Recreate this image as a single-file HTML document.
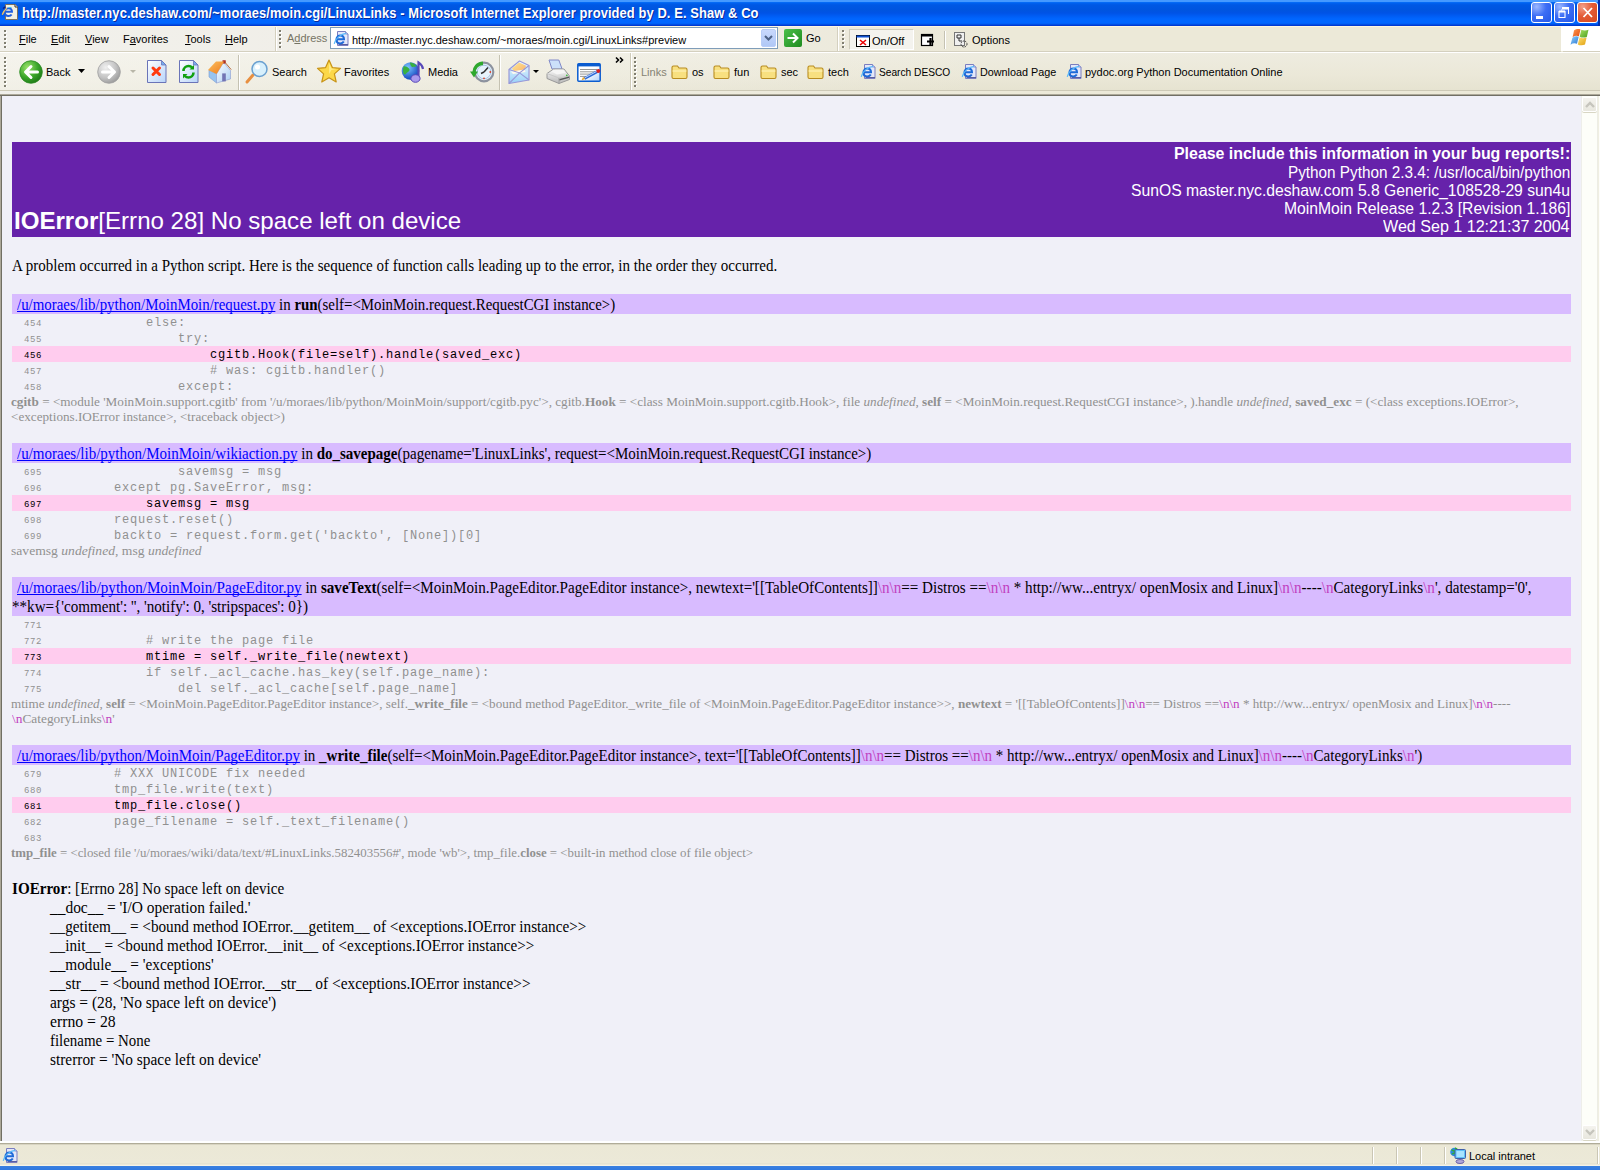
<!DOCTYPE html>
<html><head><meta charset="utf-8">
<style>
*{margin:0;padding:0;box-sizing:border-box}
html,body{width:1600px;height:1170px;overflow:hidden;background:#ece9d8;font-family:"Liberation Sans",sans-serif;position:relative}
.a{position:absolute}
svg{position:absolute;overflow:visible}
#title{left:0;top:0;width:1600px;height:26px;background:linear-gradient(#4599ff 0px,#4599ff 2px,#0a72fa 2px,#0062f0 3px,#0058e4 5px,#0055df 10px,#0053e6 13px,#005df4 16px,#0066ff 19px,#0066ff 23px,#005cf0 24px,#0040d8 25px,#0033cc 26px)}
.ttl{left:22px;top:5px;color:#fff;font:bold 14px/17px "Liberation Sans",sans-serif;text-shadow:1px 1px 0 #0a2a9a;white-space:nowrap;letter-spacing:0.1px}
.wb{top:2px;width:21px;height:21px;border:1px solid #fff;border-radius:3px}
.mnu{font:11px/13px "Liberation Sans",sans-serif;color:#000;white-space:nowrap}
.mnu u{text-decoration:underline;text-underline-offset:1px;text-decoration-skip-ink:none}
.grip{width:3px;background:linear-gradient(#807e70 0 2px,transparent 2px 4px) 0 0/2px 4px repeat-y,linear-gradient(transparent 0 1px,#fff 1px 3px,transparent 3px 4px) 1px 0/2px 4px repeat-y}
.tb{font:11px/13px "Liberation Sans",sans-serif;color:#000;white-space:nowrap}
.sep{width:2px;border-left:1px solid #c5c2b2;border-right:1px solid #fff}
.tl{position:absolute;white-space:nowrap;transform-origin:0 0}
.tl a{color:#00f;text-decoration:underline;text-decoration-skip-ink:none}
.tl s{text-decoration:none;color:#c040c0}
.sans24{font:24px/28px "Liberation Sans",sans-serif;color:#fff}
.sans16{font:16px/18px "Liberation Sans",sans-serif;color:#fff}
.serif16{font:16px/19px "Liberation Serif",serif;color:#000}
.serif13{font:13px/15px "Liberation Serif",serif;color:#909090}
.fh{left:12px;width:1559px;background:#d8bbff}
.cl{position:absolute;left:12px;width:1559px;height:16px;font:12px/16px "Liberation Mono",monospace;letter-spacing:0.8px;color:#909090;white-space:pre}
.cl>span{position:relative;top:1px}
.cl .n{font-size:9px;letter-spacing:0.6px}
.cl.hl{background:#ffccee;color:#000}
</style></head><body>
<!-- title bar -->
<div id="title" class="a"></div>
<svg style="left:0;top:2px" width="22" height="22" viewBox="0 0 22 22">
 <path d="M5.5 2.5h9.5l2.5 2.5v12.5h-12z" fill="#f2f0e4" stroke="#7c6a50" stroke-width="0.9"/>
 <path d="M15 2.5v2.5h2.5" fill="#fff" stroke="#3a3020" stroke-width="1"/>
 <path d="M11.6 12.5c-.6 1-1.8 1.5-3.2 1.5-2.2 0-3.6-1.4-3.6-3.6 0-2.3 1.6-4 3.8-4 2 0 3.4 1.4 3.4 3.4H6" stroke="#1f5ee0" stroke-width="1.9" fill="none"/>
 <path d="M8.5 5.5h3" stroke="#40c8f0" stroke-width="1"/>
 <path d="M2.3 12.8c.8-2.8 2.4-5 4.6-6.5" stroke="#f0c060" stroke-width="1.3" fill="none"/>
 <path d="M3 6.5c.6-.6 1.5-1.2 2.5-1.6" stroke="#10208a" stroke-width="1.2" fill="none"/>
</svg>
<div class="a ttl" style="transform:scaleX(0.9224);transform-origin:0 0">http://master.nyc.deshaw.com/~moraes/moin.cgi/LinuxLinks - Microsoft Internet Explorer provided by D. E. Shaw &amp; Co</div>
<div class="a wb" style="left:1531px;background:radial-gradient(circle at 25% 20%,#9cb8ff 0,#3d6ef5 45%,#2458e8 100%)"></div>
<div class="a" style="left:1536px;top:16px;width:7px;height:3px;background:#fff"></div>
<div class="a wb" style="left:1554px;background:radial-gradient(circle at 25% 20%,#9cb8ff 0,#3d6ef5 45%,#2458e8 100%)"></div>
<svg style="left:1558px;top:7px" width="12" height="11"><path d="M4 0.5h6.5v6.5M3.5 3.5v-1 M1 4.5h6v6h-6z" fill="none" stroke="#fff" stroke-width="1.1"/><path d="M1 4.5h6" stroke="#fff" stroke-width="2"/><path d="M4 1.5h6.5" stroke="#fff" stroke-width="2"/></svg>
<div class="a wb" style="left:1577px;background:radial-gradient(circle at 25% 20%,#f4a08a 0,#e35a35 45%,#d64a20 100%)"></div>
<svg style="left:1582px;top:7px" width="12" height="11"><path d="M1.5 1l8.5 9M10 1l-8.5 9" stroke="#fff" stroke-width="1.8"/></svg>
<div class="a" style="left:1598px;top:0;width:2px;height:26px;background:#0030b0"></div>

<!-- menu bar -->
<div class="a" style="left:0;top:26px;width:1600px;height:1px;background:#fdf6df"></div>
<div class="a" style="left:0;top:27px;width:1561px;height:24px;background:linear-gradient(to right,#f2f1ec 0,#efede6 500px,#ece9d8 1000px)"></div>
<div class="a" style="left:1561px;top:26px;width:39px;height:25px;background:#fff"></div>
<div class="a" style="left:0;top:51px;width:1561px;height:1px;background:#d4d0bf"></div>
<div class="a" style="left:1563px;top:51px;width:37px;height:1px;background:#d4d0bf"></div>
<div class="a grip" style="left:4px;top:30px;height:18px"></div>
<div class="a mnu" style="left:19px;top:33px"><u>F</u>ile</div>
<div class="a mnu" style="left:51px;top:33px"><u>E</u>dit</div>
<div class="a mnu" style="left:85px;top:33px"><u>V</u>iew</div>
<div class="a mnu" style="left:123px;top:33px">F<u>a</u>vorites</div>
<div class="a mnu" style="left:185px;top:33px"><u>T</u>ools</div>
<div class="a mnu" style="left:225px;top:33px"><u>H</u>elp</div>
<div class="a" style="left:275px;top:27px;width:1px;height:24px;background:#d4d0bf"></div>
<div class="a" style="left:276px;top:27px;width:1px;height:24px;background:#fff"></div>
<div class="a grip" style="left:279px;top:30px;height:18px"></div>
<div class="a mnu" style="left:287px;top:32px;color:#767464">A<u>d</u>dress</div>
<div class="a" style="left:330px;top:27px;width:448px;height:22px;background:#fff;border:1px solid #7f9db9"></div>
<svg style="left:333px;top:30px" width="16" height="16" viewBox="0 0 16 16">
 <path d="M4.5 1.5h8l2.5 2.5v11.5h-10.5z" fill="#e4e8fa" stroke="#7a7ec0"/>
 <path d="M12.5 1.5v2.5h2.5" fill="#c8d0f4" stroke="#7a7ec0" stroke-width="0.8"/>
 <path d="M5.5 14.5h9.5" stroke="#5a5ea0" stroke-width="1"/>
 <path d="M10.8 11.6c-.7 1.2-2 1.9-3.5 1.9-2.4 0-3.9-1.7-3.9-3.9 0-2.4 1.7-4.1 3.9-4.1 2.2 0 3.7 1.5 3.7 3.7H3.6" stroke="#1e6ad8" stroke-width="2" fill="none"/>
 <path d="M1.2 13.8C2.6 8 8 4 13.2 3.4" stroke="#58b8f8" stroke-width="1.1" fill="none"/>
</svg>
<div class="a mnu" style="left:352px;top:34px">http://master.nyc.deshaw.com/~moraes/moin.cgi/LinuxLinks#preview</div>
<div class="a" style="left:761px;top:29px;width:15px;height:18px;border-radius:2px;background:linear-gradient(#c8d8fc,#b0c8f6);border:1px solid #b8cdf8"></div>
<svg style="left:764px;top:35px" width="9" height="6"><path d="M1 1l3.5 3.5L8 1" stroke="#4d6185" stroke-width="2" fill="none"/></svg>
<div class="a" style="left:784px;top:29px;width:18px;height:18px;border-radius:2px;background:linear-gradient(135deg,#4cc04a,#1e8a1e)"></div>
<svg style="left:786px;top:32px" width="14" height="12"><path d="M1.5 6h10M7 1.5l4.5 4.5L7 10.5" stroke="#fff" stroke-width="2" fill="none"/></svg>
<div class="a mnu" style="left:806px;top:32px">Go</div>
<div class="a" style="left:837px;top:27px;width:1px;height:24px;background:#d4d0bf"></div>
<div class="a" style="left:838px;top:27px;width:1px;height:24px;background:#fff"></div>
<div class="a grip" style="left:842px;top:30px;height:18px"></div>
<div class="a" style="left:849px;top:29px;width:65px;height:21px;background:#f4f3ee;border:1px solid #cfccbc;border-bottom-color:#fff;border-right-color:#fff"></div>
<svg style="left:856px;top:35px" width="14" height="12"><rect x="0.5" y="0.5" width="13" height="11" fill="#fff" stroke="#000"/><rect x="0.5" y="0.5" width="13" height="2" fill="#1050d0"/><path d="M4 5l6 5M10 5l-6 5" stroke="#e00" stroke-width="1.6"/></svg>
<div class="a mnu" style="left:872px;top:35px">On/Off</div>
<svg style="left:921px;top:34px" width="14" height="13"><rect x="0.5" y="0.5" width="11" height="11" fill="#fff" stroke="#000" stroke-width="1.2"/><rect x="0.5" y="0.5" width="11" height="2" fill="#000"/><path d="M9.5 4v7M6 7.5h7" stroke="#000" stroke-width="2.2"/></svg>
<div class="a" style="left:944px;top:31px;width:1px;height:18px;background:#c5c2b2"></div>
<div class="a" style="left:945px;top:31px;width:1px;height:18px;background:#fff"></div>
<svg style="left:954px;top:32px" width="15" height="16"><rect x="0.5" y="0.5" width="10" height="13" fill="#f0f0f0" stroke="#777"/><path d="M3 3h4v3h-4zM5 6v3h3" stroke="#333" fill="none"/><circle cx="10" cy="12" r="3" fill="none" stroke="#333" stroke-dasharray="1.5 1"/></svg>
<div class="a mnu" style="left:972px;top:34px">Options</div>
<svg style="left:1569px;top:28px" width="23" height="20" viewBox="0 0 23 20">
 <defs><linearGradient id="w1" x1="0" y1="0" x2="1" y2="1"><stop offset="0" stop-color="#ff9a50"/><stop offset="1" stop-color="#e04a10"/></linearGradient>
 <linearGradient id="w2" x1="0" y1="0" x2="1" y2="1"><stop offset="0" stop-color="#a8e060"/><stop offset="1" stop-color="#4aa020"/></linearGradient>
 <linearGradient id="w3" x1="0" y1="0" x2="1" y2="1"><stop offset="0" stop-color="#90d0ff"/><stop offset="1" stop-color="#2a78d0"/></linearGradient>
 <linearGradient id="w4" x1="0" y1="0" x2="1" y2="1"><stop offset="0" stop-color="#ffe070"/><stop offset="1" stop-color="#e0a010"/></linearGradient></defs>
 <path d="M5 2.5c2-1.5 4.5-1.8 6.5-1l-1.6 6.8c-2-.9-4.3-.6-6.3.9z" fill="url(#w1)"/>
 <path d="M12.3 1.8c2.2 1 4.6 1.1 7.2 0l-1.7 7.1c-2.6 1-5 .9-7.1-.2z" fill="url(#w2)"/>
 <path d="M3.4 9.7c2-1.5 4.3-1.8 6.3-.9l-1.7 7c-2-.9-4.3-.7-6.5.9z" fill="url(#w3)"/>
 <path d="M10.5 9.3c2.1 1.1 4.5 1.2 7.1.2l-1.6 7.1c-2.6 1.1-5.1 1-7.2-.2z" fill="url(#w4)"/>
</svg>

<!-- toolbar -->
<div class="a" style="left:0;top:52px;width:1600px;height:1px;background:#fff"></div>
<div class="a" style="left:0;top:53px;width:1600px;height:37px;background:linear-gradient(to right,rgba(250,250,248,.55) 0,rgba(250,250,248,.3) 500px,rgba(250,250,248,0) 1000px),linear-gradient(#eeece0,#ebe8d8 60%,#e6e3d1)"></div>
<div class="a" style="left:0;top:90px;width:1600px;height:1px;background:#cdc9b6"></div>
<div class="a" style="left:0;top:91px;width:1600px;height:3px;background:linear-gradient(to right,#f0efea 0,#ece9d8 1000px)"></div>
<div class="a" style="left:0;top:94px;width:1600px;height:1px;background:#aca899"></div>
<div class="a" style="left:0;top:95px;width:1600px;height:1px;background:#716f64"></div>
<div class="a grip" style="left:4px;top:57px;height:30px"></div>
<svg style="left:19px;top:60px" width="24" height="24" viewBox="0 0 24 24">
 <defs><radialGradient id="gb" cx="35%" cy="30%" r="75%"><stop offset="0" stop-color="#9be36a"/><stop offset="0.6" stop-color="#3aa52a"/><stop offset="1" stop-color="#1e7a18"/></radialGradient>
 <radialGradient id="gf" cx="35%" cy="30%" r="75%"><stop offset="0" stop-color="#f0f0f0"/><stop offset="0.6" stop-color="#c4c4c4"/><stop offset="1" stop-color="#9a9a9a"/></radialGradient></defs>
 <circle cx="12" cy="12" r="11.3" fill="url(#gb)" stroke="#2b8a22" stroke-width="0.8"/>
 <path d="M18.5 12h-11M12 6.5L6.5 12 12 17.5" stroke="#fff" stroke-width="3" fill="none" stroke-linecap="round" stroke-linejoin="round"/>
</svg>
<div class="a tb" style="left:46px;top:66px">Back</div>
<svg style="left:78px;top:69px" width="7" height="4"><path d="M0 0h7L3.5 4z" fill="#000"/></svg>
<svg style="left:97px;top:60px" width="24" height="24" viewBox="0 0 24 24">
 <circle cx="12" cy="12" r="11.3" fill="url(#gf)" stroke="#a0a0a0" stroke-width="0.8"/>
 <path d="M5.5 12h11M12 6.5L17.5 12 12 17.5" stroke="#fff" stroke-width="3" fill="none" stroke-linecap="round" stroke-linejoin="round"/>
</svg>
<svg style="left:130px;top:70px" width="6" height="4"><path d="M0 0h6L3 3z" fill="#b8b6a8"/></svg>
<svg style="left:147px;top:60px" width="20" height="23" viewBox="0 0 20 23">
 <defs><linearGradient id="pg" x1="0" y1="0" x2="1" y2="1"><stop offset="0" stop-color="#ffffff"/><stop offset="1" stop-color="#b8d4fa"/></linearGradient></defs>
 <path d="M0.5 0.5h14l4.5 4.5v17.5h-18.5z" fill="url(#pg)" stroke="#6a74b8"/>
 <path d="M14.5 0.5v4.5h4.5z" fill="#78aef0" stroke="#6a74b8" stroke-width="0.8"/>
 <path d="M6 8l6.5 6.5M12.5 8L6 14.5" stroke="#ff3a10" stroke-width="3" stroke-linecap="round"/>
</svg>
<svg style="left:179px;top:60px" width="20" height="23" viewBox="0 0 20 23">
 <path d="M0.5 0.5h14l4.5 4.5v17.5h-18.5z" fill="url(#pg)" stroke="#6a74b8"/>
 <path d="M14.5 0.5v4.5h4.5z" fill="#78aef0" stroke="#6a74b8" stroke-width="0.8"/>
 <path d="M4.5 11c0-3 2.4-5 5-5 1.6 0 2.8.6 3.6 1.5" stroke="#10a010" stroke-width="2.6" fill="none"/>
 <path d="M10.5 9.5h4.5v-4.5z" fill="#10a010"/>
 <path d="M14.5 12.5c0 3-2.4 5-5 5-1.6 0-2.8-.6-3.6-1.5" stroke="#10a010" stroke-width="2.6" fill="none"/>
 <path d="M8.5 14h-4.5v4.5z" fill="#10a010"/>
</svg>
<svg style="left:208px;top:60px" width="24" height="24" viewBox="0 0 24 24">
 <defs><linearGradient id="rf" x1="0" y1="0" x2="1" y2="1"><stop offset="0" stop-color="#fbc060"/><stop offset="1" stop-color="#ee7a1a"/></linearGradient>
 <linearGradient id="fw" x1="0" y1="0" x2="1" y2="1"><stop offset="0" stop-color="#ffffff"/><stop offset="1" stop-color="#a8cdf4"/></linearGradient></defs>
 <path d="M1 10l7.5 4v9L1 17z" fill="#98c4f0" stroke="#7a9ad0" stroke-width="0.6"/>
 <path d="M8.5 14l7-11.5 7 8v8.5l-14 4z" fill="url(#fw)" stroke="#8a9ad0" stroke-width="0.6"/>
 <rect x="14.5" y="0.3" width="3.2" height="3.2" fill="#a81818"/>
 <path d="M0 10l8-8.6h8.2L8.6 14z" fill="url(#rf)"/>
 <path d="M16.2 1.4l7 8.2" stroke="#b06030" stroke-width="0.9"/>
 <rect x="14.2" y="13.4" width="3.6" height="8" fill="#7274b4"/>
</svg>
<div class="a sep" style="left:238px;top:55px;height:35px"></div>
<svg style="left:245px;top:60px" width="24" height="24" viewBox="0 0 24 24">
 <path d="M8 15l-6 7" stroke="#e89040" stroke-width="3" stroke-linecap="round"/>
 <circle cx="14.5" cy="9" r="7.5" fill="#d8f0fc" stroke="#6aa0d0" stroke-width="1.5"/>
 <circle cx="12.5" cy="7" r="2.5" fill="#fff"/>
</svg>
<div class="a tb" style="left:272px;top:66px">Search</div>
<svg style="left:316px;top:59px" width="26" height="25" viewBox="0 0 26 25">
 <path d="M13 1l3.4 7.6 8.1.8-6.1 5.5 1.8 8.1L13 18.8 5.8 23l1.8-8.1L1.5 9.4l8.1-.8z" fill="#fcd84a" stroke="#c89418" stroke-width="1.2" stroke-linejoin="round"/>
 <path d="M13 4l2.5 5.5 5 .6-5 1-2.5 4z" fill="#fff2a0" opacity="0.7"/>
</svg>
<div class="a tb" style="left:344px;top:66px">Favorites</div>
<svg style="left:401px;top:60px" width="24" height="24" viewBox="0 0 24 24">
 <defs><radialGradient id="gl" cx="35%" cy="30%" r="70%"><stop offset="0" stop-color="#7cc4ff"/><stop offset="1" stop-color="#1448c0"/></radialGradient></defs>
 <circle cx="9.5" cy="11" r="8.8" fill="url(#gl)"/>
 <path d="M2.5 6.5c2-.5 3.5.5 5 1.5s1.5 3-.5 4-2 3-3.5 2.5c-1.5-.8-2-4.5-1-8zM9 2.5c2.5.3 5 1.2 6.5 3.5-1.2 1.2-3 .3-4 1.2-1.5-.5-2.5-2.5-2.5-4.7z" fill="#38b040"/>
 <path d="M17.5 17.5V2.5c1.5 1 4 2.5 4.5 6.5" stroke="#5848b8" stroke-width="2.2" fill="none"/>
 <ellipse cx="14.5" cy="18.5" rx="4.6" ry="3.8" fill="#a898ec" stroke="#5848b8" stroke-width="1"/>
</svg>
<div class="a tb" style="left:428px;top:66px">Media</div>
<svg style="left:470px;top:61px" width="24" height="22" viewBox="0 0 24 22">
 <circle cx="14" cy="11" r="9.3" fill="#e6f2fc" stroke="#8c929e" stroke-width="2.2"/>
 <circle cx="14" cy="11" r="6.8" fill="none" stroke="#a8c4e4" stroke-width="1"/>
 <path d="M14 11l4-4.5M14 11l-3 1.5" stroke="#303030" stroke-width="1.5"/>
 <circle cx="20.3" cy="11" r=".9" fill="#e04020"/><circle cx="14" cy="17.3" r=".9" fill="#e04020"/>
 <path d="M13 2.2C7.5 2.5 4 6.5 4 11.5" stroke="#2ea82e" stroke-width="3.4" fill="none"/>
 <path d="M0 10.5h8l-4 6z" fill="#2ea82e"/>
</svg>
<div class="a sep" style="left:499px;top:55px;height:35px"></div>
<svg style="left:508px;top:60px" width="23" height="24" viewBox="0 0 23 24">
 <defs><linearGradient id="ev" x1="0" y1="0" x2="0" y2="1"><stop offset="0" stop-color="#f0faff"/><stop offset="1" stop-color="#98d0f8"/></linearGradient>
 <linearGradient id="lt" x1="0" y1="0" x2="1" y2="1"><stop offset="0" stop-color="#ffe890"/><stop offset="1" stop-color="#f8b070"/></linearGradient></defs>
 <path d="M1 23.5V9.5L11.5 1 21 5.5V20z" fill="url(#ev)" stroke="#9898d8" stroke-width="1.2" stroke-linejoin="round"/>
 <path d="M4 8.5L11 2.5l7 3.2-1.5 5.5-9.5 1.5z" fill="url(#lt)"/>
 <path d="M3 11.5l13.5-2 1 2.5-12.5 2z" fill="#fffaf0"/>
 <path d="M1 23.5l10.6-10.6L21 20M1 9.5l10.6 3.4L21 5.5" stroke="#9898d8" stroke-width="1.1" fill="none"/>
</svg>
<svg style="left:533px;top:70px" width="6" height="4"><path d="M0 0h6L3 3z" fill="#000"/></svg>
<svg style="left:546px;top:59px" width="24" height="25" viewBox="0 0 24 25">
 <defs><linearGradient id="pb" x1="0" y1="0" x2="0" y2="1"><stop offset="0" stop-color="#fafafa"/><stop offset="1" stop-color="#b8b8b8"/></linearGradient></defs>
 <path d="M3 1h9.8l3.3 9H6z" fill="#cce0fa" stroke="#8088c8" stroke-width="1"/>
 <path d="M1 14.5L7.5 10h10.5l5.5 7v3.5L13 24.5 1 19.5z" fill="url(#pb)" stroke="#9a9a9a" stroke-width="1"/>
 <path d="M1 14.5l12 4.5 10.5-2" stroke="#c8c8c8" stroke-width="1" fill="none"/>
 <path d="M5.5 12.5l3.5-1.8h8l2.5 3-8.5 1.8z" fill="#f6f6f6"/>
 <path d="M13 19v5.5" stroke="#a0a0a0" stroke-width="1"/>
 <path d="M13.5 21.5l9.5-2.5v-1.5l-9.5 2.5z" fill="#585858"/>
 <circle cx="20.8" cy="16.3" r=".9" fill="#40c040"/>
</svg>
<svg style="left:577px;top:63px" width="25" height="19" viewBox="0 0 25 19">
 <defs><linearGradient id="ew" x1="0" y1="0" x2="1" y2="1"><stop offset="0.5" stop-color="#ffffff"/><stop offset="1" stop-color="#b0d0f8"/></linearGradient></defs>
 <rect x="0.8" y="0.8" width="22.4" height="17.4" rx="1" fill="url(#ew)" stroke="#0a5cd0" stroke-width="1.5"/>
 <rect x="0.8" y="0.8" width="22.4" height="2.6" fill="#0a5cd0"/>
 <path d="M3 6.5h17M3 8.8h17M3 11.1h14M3 13.4h6" stroke="#8a8a8a" stroke-width="0.9"/>
 <path d="M7.5 15.5l13-7" stroke="#2a68d8" stroke-width="2.6"/>
 <path d="M7.8 14.8l12.6-6.8" stroke="#e8f0ff" stroke-width="0.8"/>
 <path d="M4.5 17.5l1.5-3.6 2.5 1.8z" fill="#e8a830"/>
 <circle cx="21.3" cy="8" r="2" fill="#d82020"/>
</svg>
<svg style="left:615px;top:57px" width="9" height="6"><path d="M1 0.5l2.5 2.5L1 5.5M5 0.5l2.5 2.5L5 5.5" stroke="#000" stroke-width="1.6" fill="none"/></svg>
<div class="a" style="left:630px;top:53px;width:1px;height:37px;background:#d0ccba"></div>
<div class="a" style="left:631px;top:53px;width:1px;height:37px;background:#fff"></div>
<div class="a grip" style="left:634px;top:57px;height:30px"></div>
<div class="a tb" style="left:641px;top:66px;color:#858373">Links</div>
<svg style="left:671px;top:65px" width="17" height="14" id="fold" viewBox="0 0 17 14"><path d="M1 2.5c0-1 .5-1.5 1.5-1.5h4l1.5 2h6.5c1 0 1.5.5 1.5 1.5v7.5c0 1-.5 1.5-1.5 1.5h-12c-1 0-1.5-.5-1.5-1.5z" fill="#f8e080" stroke="#b88c20" stroke-width="1.1"/><path d="M1.5 6h14" stroke="#fff4c0" stroke-width="1"/></svg>
<div class="a tb" style="left:692px;top:66px">os</div>
<svg style="left:713px;top:65px" width="17" height="14" viewBox="0 0 17 14"><path d="M1 2.5c0-1 .5-1.5 1.5-1.5h4l1.5 2h6.5c1 0 1.5.5 1.5 1.5v7.5c0 1-.5 1.5-1.5 1.5h-12c-1 0-1.5-.5-1.5-1.5z" fill="#f8e080" stroke="#b88c20" stroke-width="1.1"/><path d="M1.5 6h14" stroke="#fff4c0" stroke-width="1"/></svg>
<div class="a tb" style="left:734px;top:66px">fun</div>
<svg style="left:760px;top:65px" width="17" height="14" viewBox="0 0 17 14"><path d="M1 2.5c0-1 .5-1.5 1.5-1.5h4l1.5 2h6.5c1 0 1.5.5 1.5 1.5v7.5c0 1-.5 1.5-1.5 1.5h-12c-1 0-1.5-.5-1.5-1.5z" fill="#f8e080" stroke="#b88c20" stroke-width="1.1"/><path d="M1.5 6h14" stroke="#fff4c0" stroke-width="1"/></svg>
<div class="a tb" style="left:781px;top:66px">sec</div>
<svg style="left:807px;top:65px" width="17" height="14" viewBox="0 0 17 14"><path d="M1 2.5c0-1 .5-1.5 1.5-1.5h4l1.5 2h6.5c1 0 1.5.5 1.5 1.5v7.5c0 1-.5 1.5-1.5 1.5h-12c-1 0-1.5-.5-1.5-1.5z" fill="#f8e080" stroke="#b88c20" stroke-width="1.1"/><path d="M1.5 6h14" stroke="#fff4c0" stroke-width="1"/></svg>
<div class="a tb" style="left:828px;top:66px">tech</div>
<svg style="left:860px;top:63px" width="16" height="16" viewBox="0 0 16 16">
 <path d="M4.5 1.5h8l2.5 2.5v11.5h-10.5z" fill="#e4e8fa" stroke="#7a7ec0"/>
 <path d="M12.5 1.5v2.5h2.5" fill="#c8d0f4" stroke="#7a7ec0" stroke-width="0.8"/>
 <path d="M5.5 14.5h9.5" stroke="#5a5ea0" stroke-width="1"/>
 <path d="M10.8 11.6c-.7 1.2-2 1.9-3.5 1.9-2.4 0-3.9-1.7-3.9-3.9 0-2.4 1.7-4.1 3.9-4.1 2.2 0 3.7 1.5 3.7 3.7H3.6" stroke="#1e6ad8" stroke-width="2" fill="none"/>
 <path d="M1.2 13.8C2.6 8 8 4 13.2 3.4" stroke="#58b8f8" stroke-width="1.1" fill="none"/>
</svg>
<div class="a tb" style="left:879px;top:66px;transform:scaleX(0.925);transform-origin:0 0">Search DESCO</div>
<svg style="left:961px;top:63px" width="16" height="16" viewBox="0 0 16 16">
 <path d="M4.5 1.5h8l2.5 2.5v11.5h-10.5z" fill="#e4e8fa" stroke="#7a7ec0"/>
 <path d="M12.5 1.5v2.5h2.5" fill="#c8d0f4" stroke="#7a7ec0" stroke-width="0.8"/>
 <path d="M5.5 14.5h9.5" stroke="#5a5ea0" stroke-width="1"/>
 <path d="M10.8 11.6c-.7 1.2-2 1.9-3.5 1.9-2.4 0-3.9-1.7-3.9-3.9 0-2.4 1.7-4.1 3.9-4.1 2.2 0 3.7 1.5 3.7 3.7H3.6" stroke="#1e6ad8" stroke-width="2" fill="none"/>
 <path d="M1.2 13.8C2.6 8 8 4 13.2 3.4" stroke="#58b8f8" stroke-width="1.1" fill="none"/>
</svg>
<div class="a tb" style="left:980px;top:66px;transform:scaleX(0.982);transform-origin:0 0">Download Page</div>
<svg style="left:1066px;top:63px" width="16" height="16" viewBox="0 0 16 16">
 <path d="M4.5 1.5h8l2.5 2.5v11.5h-10.5z" fill="#e4e8fa" stroke="#7a7ec0"/>
 <path d="M12.5 1.5v2.5h2.5" fill="#c8d0f4" stroke="#7a7ec0" stroke-width="0.8"/>
 <path d="M5.5 14.5h9.5" stroke="#5a5ea0" stroke-width="1"/>
 <path d="M10.8 11.6c-.7 1.2-2 1.9-3.5 1.9-2.4 0-3.9-1.7-3.9-3.9 0-2.4 1.7-4.1 3.9-4.1 2.2 0 3.7 1.5 3.7 3.7H3.6" stroke="#1e6ad8" stroke-width="2" fill="none"/>
 <path d="M1.2 13.8C2.6 8 8 4 13.2 3.4" stroke="#58b8f8" stroke-width="1.1" fill="none"/>
</svg>
<div class="a tb" style="left:1085px;top:66px">pydoc.org Python Documentation Online</div>

<!-- content area -->
<div class="a" style="left:0;top:96px;width:1px;height:1045px;background:#aca899"></div>
<div class="a" style="left:1px;top:96px;width:1px;height:1045px;background:#716f64"></div>
<div class="a" style="left:2px;top:96px;width:1579px;height:1045px;background:#f0f0f8"></div>
<div class="a" style="left:1581px;top:96px;width:1px;height:1045px;background:#eeeeea"></div>
<div class="a" style="left:1582px;top:96px;width:15px;height:1045px;background:#fdfef9"></div>
<div class="a" style="left:1597px;top:96px;width:1px;height:1045px;background:#ededE5"></div>
<div class="a" style="left:1598px;top:96px;width:1px;height:1045px;background:#f0efe2"></div>
<div class="a" style="left:1599px;top:96px;width:1px;height:1045px;background:#fdfdfa"></div>
<div class="a" style="left:1582px;top:97px;width:15px;height:15px;border:1px solid #fff;border-radius:2px;background:linear-gradient(#f4f3ee,#e8e7de);box-shadow:0 1px 0 #d8d6c4"></div>
<svg style="left:1585px;top:101px" width="10" height="7"><path d="M1 6L5 2 9 6" stroke="#c6c5bd" stroke-width="2.4" fill="none"/></svg>
<div class="a" style="left:1582px;top:1125px;width:15px;height:15px;border:1px solid #fff;border-radius:2px;background:linear-gradient(#f4f3ee,#e8e7de);box-shadow:0 1px 0 #d8d6c4"></div>
<svg style="left:1585px;top:1129px" width="10" height="7"><path d="M1 1L5 5 9 1" stroke="#c6c5bd" stroke-width="2.4" fill="none"/></svg>
<div class="a" style="left:0;top:1141px;width:1600px;height:2px;background:#fff"></div>

<!-- page -->
<div class="a" style="left:12px;top:142px;width:1559px;height:95px;background:#6622aa"></div>
<div class="a fh" style="top:294px;height:20px"></div>
<div class="a fh" style="top:443px;height:20px"></div>
<div class="a fh" style="top:577px;height:39px"></div>
<div class="a fh" style="top:745px;height:20px"></div>
<div class="cl" style="top:314px"><span><span class="n">&nbsp;&nbsp;454</span>&nbsp;            else:</span></div>
<div class="cl" style="top:330px"><span><span class="n">&nbsp;&nbsp;455</span>&nbsp;                try:</span></div>
<div class="cl hl" style="top:346px"><span><span class="n">&nbsp;&nbsp;456</span>&nbsp;                    cgitb.Hook(file=self).handle(saved_exc)</span></div>
<div class="cl" style="top:362px"><span><span class="n">&nbsp;&nbsp;457</span>&nbsp;                    # was: cgitb.handler()</span></div>
<div class="cl" style="top:378px"><span><span class="n">&nbsp;&nbsp;458</span>&nbsp;                except:</span></div>
<div class="cl" style="top:463px"><span><span class="n">&nbsp;&nbsp;695</span>&nbsp;                savemsg = msg</span></div>
<div class="cl" style="top:479px"><span><span class="n">&nbsp;&nbsp;696</span>&nbsp;        except pg.SaveError, msg:</span></div>
<div class="cl hl" style="top:495px"><span><span class="n">&nbsp;&nbsp;697</span>&nbsp;            savemsg = msg</span></div>
<div class="cl" style="top:511px"><span><span class="n">&nbsp;&nbsp;698</span>&nbsp;        request.reset()</span></div>
<div class="cl" style="top:527px"><span><span class="n">&nbsp;&nbsp;699</span>&nbsp;        backto = request.form.get('backto', [None])[0]</span></div>
<div class="cl" style="top:616px"><span><span class="n">&nbsp;&nbsp;771</span>&nbsp;</span></div>
<div class="cl" style="top:632px"><span><span class="n">&nbsp;&nbsp;772</span>&nbsp;            # write the page file</span></div>
<div class="cl hl" style="top:648px"><span><span class="n">&nbsp;&nbsp;773</span>&nbsp;            mtime = self._write_file(newtext)</span></div>
<div class="cl" style="top:664px"><span><span class="n">&nbsp;&nbsp;774</span>&nbsp;            if self._acl_cache.has_key(self.page_name):</span></div>
<div class="cl" style="top:680px"><span><span class="n">&nbsp;&nbsp;775</span>&nbsp;                del self._acl_cache[self.page_name]</span></div>
<div class="cl" style="top:765px"><span><span class="n">&nbsp;&nbsp;679</span>&nbsp;        # XXX UNICODE fix needed</span></div>
<div class="cl" style="top:781px"><span><span class="n">&nbsp;&nbsp;680</span>&nbsp;        tmp_file.write(text)</span></div>
<div class="cl hl" style="top:797px"><span><span class="n">&nbsp;&nbsp;681</span>&nbsp;        tmp_file.close()</span></div>
<div class="cl" style="top:813px"><span><span class="n">&nbsp;&nbsp;682</span>&nbsp;        page_filename = self._text_filename()</span></div>
<div class="cl" style="top:829px"><span><span class="n">&nbsp;&nbsp;683</span>&nbsp;</span></div>
<div id="hdl" class="tl sans24" style="left:14.00px;top:207px;transform:scaleX(1.00357)"><b>IOError</b>[Errno 28] No space left on device</div>
<div id="hr1" class="tl sans16" style="left:1174.00px;top:145px;transform:scaleX(0.99482)"><b>Please include this information in your bug reports!:</b></div>
<div id="hr2" class="tl sans16" style="left:1288.00px;top:164px;transform:scaleX(0.95578)">Python Python 2.3.4: /usr/local/bin/python</div>
<div id="hr3" class="tl sans16" style="left:1131.40px;top:182px;transform:scaleX(0.98122)">SunOS master.nyc.deshaw.com 5.8 Generic_108528-29 sun4u</div>
<div id="hr4" class="tl sans16" style="left:1283.80px;top:200px;transform:scaleX(0.98135)">MoinMoin Release 1.2.3 [Revision 1.186]</div>
<div id="hr5" class="tl sans16" style="left:1382.50px;top:218px;transform:scaleX(1.00500)">Wed Sep 1 12:21:37 2004</div>
<div id="intro" class="tl serif16" style="left:12.00px;top:256px;transform:scaleX(0.93873)">A problem occurred in a Python script. Here is the sequence of function calls leading up to the error, in the order they occurred.</div>
<div id="f1h" class="tl serif16" style="left:17.00px;top:295px;transform:scaleX(0.93021)"><a>/u/moraes/lib/python/MoinMoin/request.py</a> in <b>run</b>(self=&lt;MoinMoin.request.RequestCGI instance&gt;)</div>
<div id="f1d1" class="tl serif13" style="left:11.00px;top:394px;transform:scaleX(1.01503)"><b>cgitb</b> = &lt;module 'MoinMoin.support.cgitb' from '/u/moraes/lib/python/MoinMoin/support/cgitb.pyc'&gt;, cgitb.<b>Hook</b> = &lt;class MoinMoin.support.cgitb.Hook&gt;, file <i>undefined</i>, <b>self</b> = &lt;MoinMoin.request.RequestCGI instance&gt;, ).handle <i>undefined</i>, <b>saved_exc</b> = (&lt;class exceptions.IOError&gt;,</div>
<div id="f1d2" class="tl serif13" style="left:11.00px;top:409px;transform:scaleX(1.01166)">&lt;exceptions.IOError instance&gt;, &lt;traceback object&gt;)</div>
<div id="f2h" class="tl serif16" style="left:17.00px;top:444px;transform:scaleX(0.93769)"><a>/u/moraes/lib/python/MoinMoin/wikiaction.py</a> in <b>do_savepage</b>(pagename='LinuxLinks', request=&lt;MoinMoin.request.RequestCGI instance&gt;)</div>
<div id="f2d" class="tl serif13" style="left:11.00px;top:543px;transform:scaleX(1.04722)">savemsg <i>undefined</i>, msg <i>undefined</i></div>
<div id="f3h1" class="tl serif16" style="left:17.00px;top:578px;transform:scaleX(0.94319)"><a>/u/moraes/lib/python/MoinMoin/PageEditor.py</a> in <b>saveText</b>(self=&lt;MoinMoin.PageEditor.PageEditor instance&gt;, newtext='[[TableOfContents]]<s>\n\n</s>== Distros ==<s>\n\n</s> * http://ww...entryx/ openMosix and Linux]<s>\n\n</s>----<s>\n</s>CategoryLinks<s>\n</s>', datestamp='0',</div>
<div id="f3h2" class="tl serif16" style="left:12.00px;top:597px;transform:scaleX(0.94388)">**kw={'comment': '', 'notify': 0, 'stripspaces': 0})</div>
<div id="f3d1" class="tl serif13" style="left:11.00px;top:696px;transform:scaleX(1.00888)">mtime <i>undefined</i>, <b>self</b> = &lt;MoinMoin.PageEditor.PageEditor instance&gt;, self.<b>_write_file</b> = &lt;bound method PageEditor._write_file of &lt;MoinMoin.PageEditor.PageEditor instance&gt;&gt;, <b>newtext</b> = '[[TableOfContents]]<s>\n\n</s>== Distros ==<s>\n\n</s> * http://ww...entryx/ openMosix and Linux]<s>\n\n</s>----</div>
<div id="f3d2" class="tl serif13" style="left:12.00px;top:711px;transform:scaleX(1.02784)"><s>\n</s>CategoryLinks<s>\n</s>'</div>
<div id="f4h" class="tl serif16" style="left:17.00px;top:746px;transform:scaleX(0.93756)"><a>/u/moraes/lib/python/MoinMoin/PageEditor.py</a> in <b>_write_file</b>(self=&lt;MoinMoin.PageEditor.PageEditor instance&gt;, text='[[TableOfContents]]<s>\n\n</s>== Distros ==<s>\n\n</s> * http://ww...entryx/ openMosix and Linux]<s>\n\n</s>----<s>\n</s>CategoryLinks<s>\n</s>')</div>
<div id="f4d" class="tl serif13" style="left:11.00px;top:845px;transform:scaleX(0.98906)"><b>tmp_file</b> = &lt;closed file '/u/moraes/wiki/data/text/#LinuxLinks.582403556#', mode 'wb'&gt;, tmp_file.<b>close</b> = &lt;built-in method close of file object&gt;</div>
<div id="e0" class="tl serif16" style="left:12.00px;top:879px;transform:scaleX(0.94465)"><b>IOError</b>: [Errno 28] No space left on device</div>
<div id="e1" class="tl serif16" style="left:50.00px;top:898px;transform:scaleX(0.96387)">__doc__ = 'I/O operation failed.'</div>
<div id="e2" class="tl serif16" style="left:50.00px;top:917px;transform:scaleX(0.95158)">__getitem__ = &lt;bound method IOError.__getitem__ of &lt;exceptions.IOError instance&gt;&gt;</div>
<div id="e3" class="tl serif16" style="left:50.00px;top:936px;transform:scaleX(0.94913)">__init__ = &lt;bound method IOError.__init__ of &lt;exceptions.IOError instance&gt;&gt;</div>
<div id="e4" class="tl serif16" style="left:50.00px;top:955px;transform:scaleX(0.95588)">__module__ = 'exceptions'</div>
<div id="e5" class="tl serif16" style="left:50.00px;top:974px;transform:scaleX(0.96187)">__str__ = &lt;bound method IOError.__str__ of &lt;exceptions.IOError instance&gt;&gt;</div>
<div id="e6" class="tl serif16" style="left:50.00px;top:993px;transform:scaleX(0.96632)">args = (28, 'No space left on device')</div>
<div id="e7" class="tl serif16" style="left:50.00px;top:1012px;transform:scaleX(0.98237)">errno = 28</div>
<div id="e8" class="tl serif16" style="left:50.00px;top:1031px;transform:scaleX(0.93188)">filename = None</div>
<div id="e9" class="tl serif16" style="left:50.00px;top:1050px;transform:scaleX(0.95939)">strerror = 'No space left on device'</div>

<!-- status bar -->
<div class="a" style="left:0;top:1143px;width:1600px;height:23px;background:linear-gradient(#b0ac98 0,#b0ac98 1px,#d8d4c2 1px,#d8d4c2 2px,#ebe8d6 2px,#ece9d8 20px,#e0ddcb 21px,#f6f3e6 22px,#f6f3e6 23px)"></div>
<svg style="left:2px;top:1147px" width="16" height="16" viewBox="0 0 16 16">
 <path d="M4.5 1.5h8l2.5 2.5v11.5h-10.5z" fill="#e4e8fa" stroke="#7a7ec0"/>
 <path d="M12.5 1.5v2.5h2.5" fill="#c8d0f4" stroke="#7a7ec0" stroke-width="0.8"/>
 <path d="M5.5 14.5h9.5" stroke="#5a5ea0" stroke-width="1"/>
 <path d="M10.8 11.6c-.7 1.2-2 1.9-3.5 1.9-2.4 0-3.9-1.7-3.9-3.9 0-2.4 1.7-4.1 3.9-4.1 2.2 0 3.7 1.5 3.7 3.7H3.6" stroke="#1e6ad8" stroke-width="2" fill="none"/>
 <path d="M1.2 13.8C2.6 8 8 4 13.2 3.4" stroke="#58b8f8" stroke-width="1.1" fill="none"/>
</svg>
<div class="a" style="left:1372px;top:1147px;width:2px;height:17px;border-left:1px solid #cac6b4;border-right:1px solid #fff"></div>
<div class="a" style="left:1396px;top:1147px;width:2px;height:17px;border-left:1px solid #cac6b4;border-right:1px solid #fff"></div>
<div class="a" style="left:1420px;top:1147px;width:2px;height:17px;border-left:1px solid #cac6b4;border-right:1px solid #fff"></div>
<div class="a" style="left:1444px;top:1147px;width:2px;height:17px;border-left:1px solid #cac6b4;border-right:1px solid #fff"></div>
<div class="a" style="left:1597px;top:1147px;width:2px;height:17px;border-left:1px solid #cac6b4;border-right:1px solid #fff"></div>
<svg style="left:1450px;top:1147px" width="16" height="17" viewBox="0 0 16 17">
 <circle cx="4.5" cy="5" r="4.3" fill="#2c8ae0"/>
 <path d="M1.5 3c1.5 0 2 1 3 1s1 1.5 0 2-2 1-2.5.5M5 1c1 .5 2 1 2.5 2" stroke="#30b030" stroke-width="1.6" fill="none"/>
 <rect x="5" y="2.5" width="10.5" height="9" rx="1" fill="#60c0f8" stroke="#4060a8"/>
 <rect x="6.5" y="4" width="7.5" height="6" fill="#a8e4ff"/>
 <ellipse cx="10" cy="14.5" rx="4" ry="2" fill="#b0a8d8" stroke="#6a60a8"/>
</svg>
<div class="a tb" style="left:1469px;top:1150px">Local intranet</div>
<div class="a" style="left:0;top:1166px;width:1600px;height:4px;background:linear-gradient(#3a80e0,#2f78e0)"></div>
</body></html>
